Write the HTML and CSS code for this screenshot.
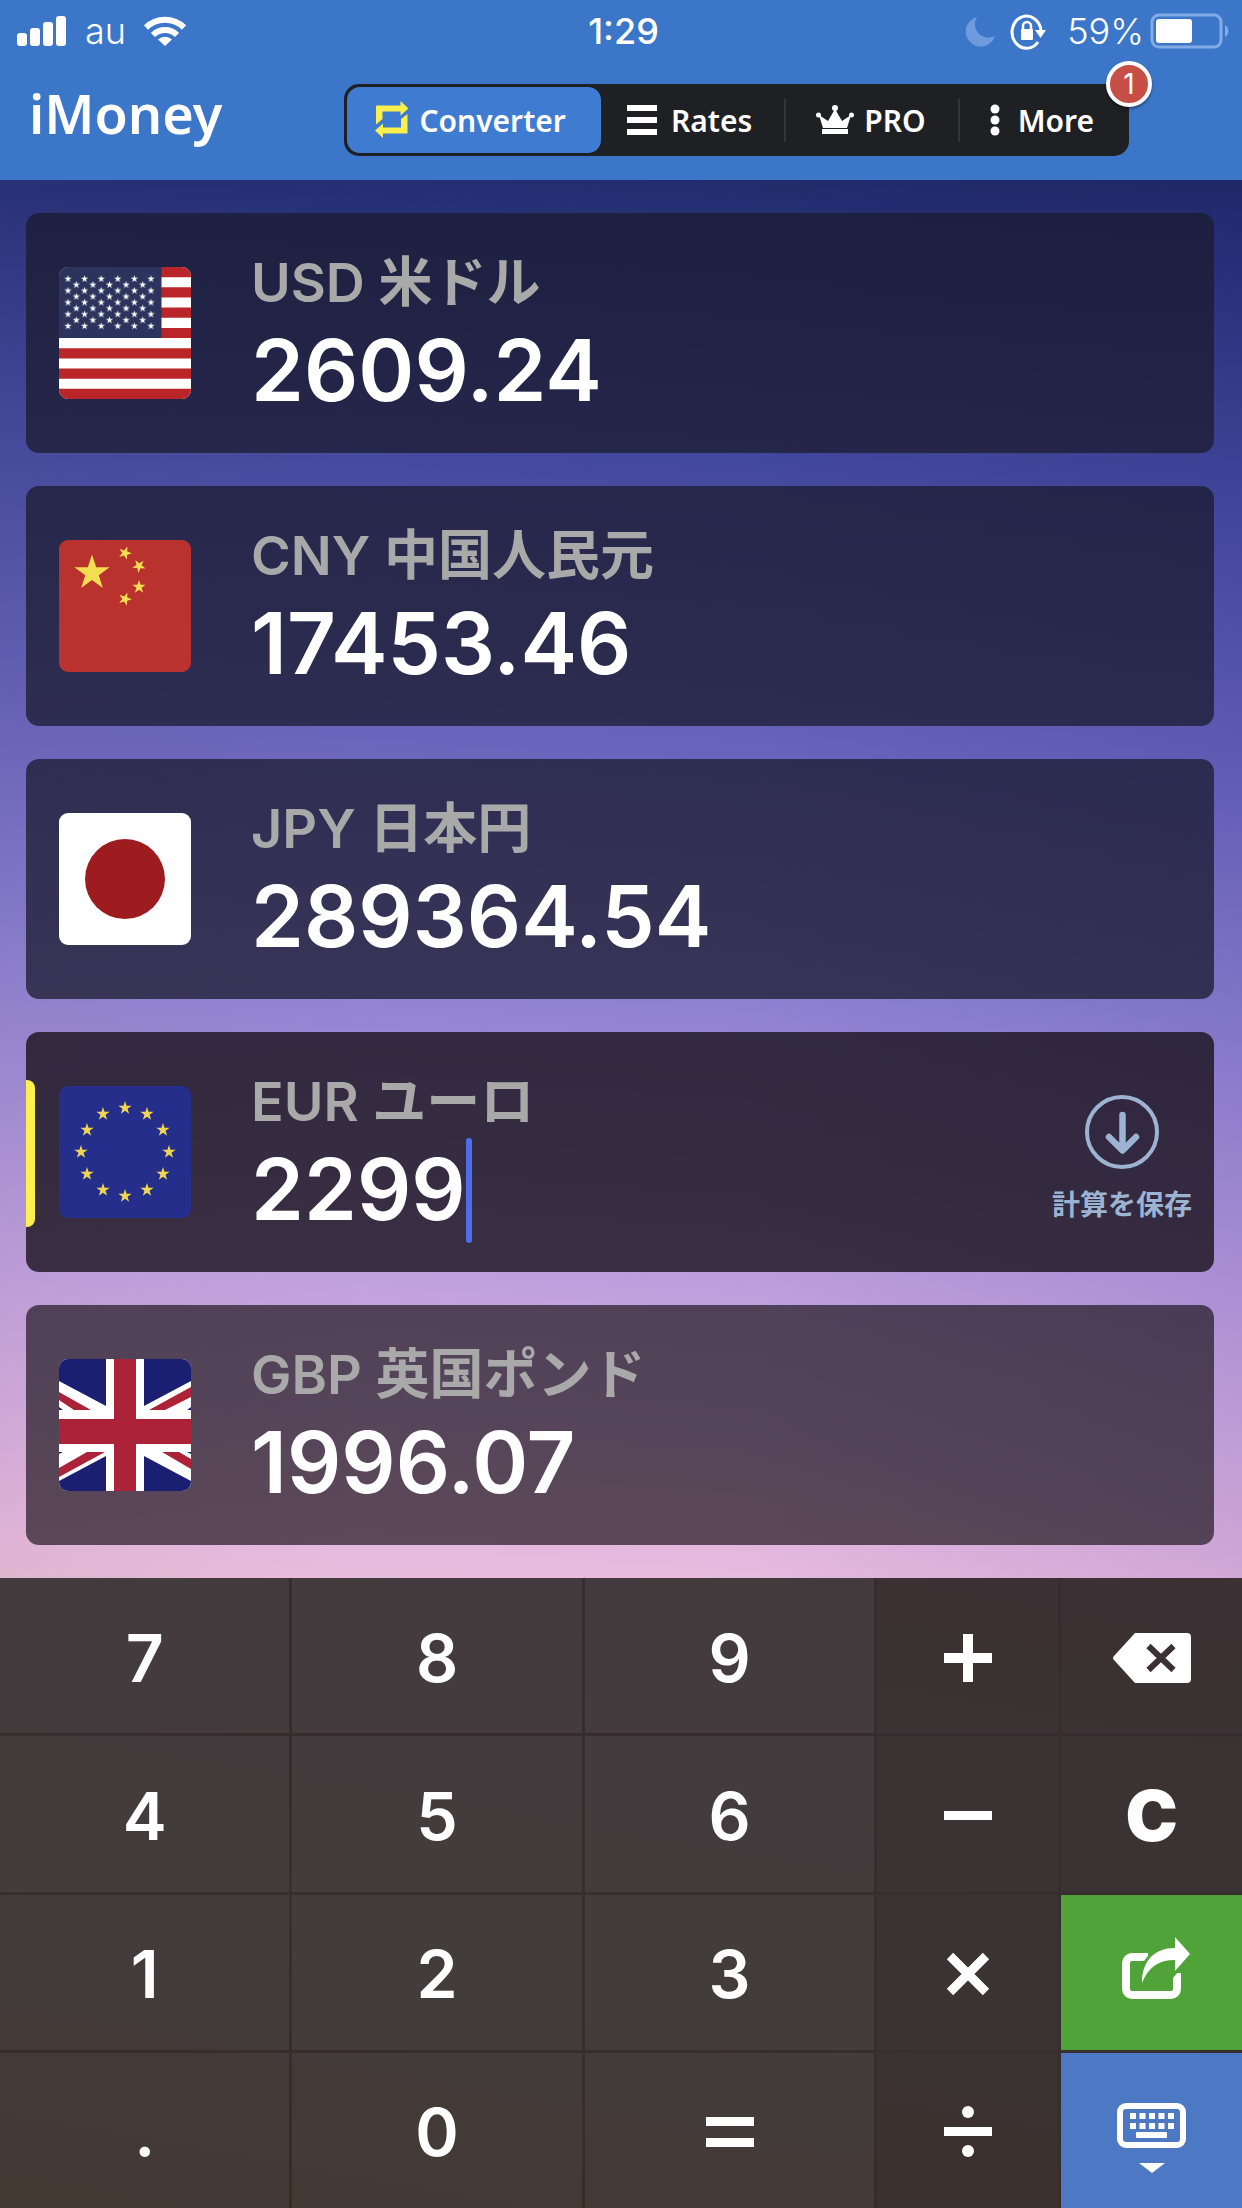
FILE: index.html
```html
<!DOCTYPE html>
<html lang="ja">
<head>
  <meta charset="utf-8">
  <meta name="viewport" content="width=device-width, initial-scale=1">
  <title>iMoney</title>
  <link rel="stylesheet" href="styles.css">
</head>
<body>
  <!-- shared star shape for the flags -->
  <svg class="defs" width="0" height="0">
    <defs>
      <polygon id="star" points="0,-10 2.25,-3.09 9.51,-3.09 3.63,1.18 5.88,8.09 0,3.82 -5.88,8.09 -3.63,1.18 -9.51,-3.09 -2.25,-3.09"/>
      <pattern id="stars" width="16.6" height="11.8" patternUnits="userSpaceOnUse">
        <use href="#star" transform="translate(8.3 5.9) scale(.38)" fill="#fff"/>
      </pattern>
    </defs>
  </svg>

  <header class="header">
    <div class="status">
      <div class="status-left">
        <svg width="50" height="32" viewBox="0 0 50 32" fill="#fff">
          <rect x="0" y="18" width="10" height="13" rx="3"/>
          <rect x="13" y="13" width="10" height="18" rx="3"/>
          <rect x="26" y="7" width="10" height="24" rx="3"/>
          <rect x="39" y="1" width="10" height="30" rx="3"/>
        </svg>
        <span>au</span>
        <svg width="42" height="32" viewBox="0 0 42 32" fill="none" stroke="#fff" stroke-width="6">
          <path d="M2 12.500a27 27 0 0 1 38 0"/>
          <path d="M9 20a17 17 0 0 1 24 0"/>
          <path d="M21 31l-7-6.500a10 10 0 0 1 14 0z" fill="#fff" stroke="none"/>
        </svg>
      </div>
      <time class="clock">1:29</time>
      <div class="status-right">
        <svg width="28" height="29" viewBox="0 0 28 29"><path d="M10 0A15 15 0 1 0 28 19A13.500 13.500 0 0 1 10 0z" fill="#6d9bdd"/></svg>
        <svg width="36" height="38" viewBox="0 0 36 38" fill="none" stroke="#fff" stroke-width="3">
          <path d="M27 30a14.500 16 0 1 1 3-11"/>
          <path d="M24 18h11l-5.500 8z" fill="#fff" stroke="none"/>
          <rect x="10" y="17" width="12" height="11" rx="1" fill="#fff" stroke="none"/>
          <path d="M12 18v-4a4 4 0 0 1 8 0v4" stroke-width="2.500"/>
        </svg>
        <span class="percent">59%</span>
        <svg width="80" height="42" viewBox="0 0 80 42">
          <rect x="2" y="5" width="69" height="32" rx="7" fill="none" stroke="#83abe4" stroke-width="3"/>
          <rect x="6" y="9" width="36" height="24" rx="3" fill="#fff"/>
          <path d="M75 15a7 7 0 0 1 0 12z" fill="#83abe4"/>
        </svg>
      </div>
    </div>

    <div class="navbar">
      <h1 class="brand">iMoney</h1>
      <nav class="tabs">
        <a href="#converter" class="tab active">
          <svg width="34" height="38" viewBox="0 0 34 38" fill="#f9f04d">
            <path d="M1 4.500h24.500V0l8 7.500-8 7v-4H7.500V18L1 23.500z"/>
            <path d="M32.500 32.500H8V37l-8-7.500 8-7v4h18V18l6.500-5z"/>
          </svg>
          Converter
        </a>
        <a href="#rates" class="tab tab-rates">
          <svg width="30" height="32" viewBox="0 0 30 32" fill="#fff"><path d="M0 1h30v6H0zM0 13h30v6H0zM0 25h30v6H0z"/></svg>
          Rates
        </a>
        <a href="#pro" class="tab tab-pro">
          <svg width="38" height="30" viewBox="0 0 38 30" fill="#fff">
            <path d="M3 10l9 6 7-12 7 12 9-6-4 13H7z"/>
            <circle cx="19" cy="3" r="3"/><circle cx="2.500" cy="10" r="2.500"/><circle cx="35.500" cy="10" r="2.500"/>
            <path d="M6 24h26v5H6z"/>
          </svg>
          PRO
        </a>
        <a href="#more" class="tab tab-more">
          <svg width="10" height="32" viewBox="0 0 10 32" fill="#fff"><circle cx="5" cy="5" r="4.500"/><circle cx="5" cy="16" r="4.500"/><circle cx="5" cy="27" r="4.500"/></svg>
          More
        </a>
        <span class="badge">1</span>
      </nav>
    </div>
  </header>

  <main class="cards">
    <section class="card">
      <svg class="flag" viewBox="0 0 132 132">
        <rect width="132" height="132" fill="#fff"/>
        <path d="M0 5.080h132M0 25.380h132M0 45.690h132M0 66h132M0 86.300h132M0 106.610h132M0 126.920h132" stroke="#ba2529" stroke-width="10.150"/>
        <rect width="102.500" height="71" fill="#2c345e"/>
        <g transform="translate(.7 6)"><rect width="99.600" height="59" fill="url(#stars)"/></g>
        <g transform="translate(9 11.900)"><rect width="83" height="47.200" fill="url(#stars)"/></g>
      </svg>
      <div class="info">
        <label class="name" for="usd">USD 米ドル</label>
        <input class="value" id="usd" type="text" value="2609.24" readonly>
      </div>
    </section>

    <section class="card">
      <svg class="flag" viewBox="0 0 132 132" fill="#f3dd50">
        <rect width="132" height="132" fill="#b9322e"/>
        <use href="#star" transform="translate(33 33) scale(1.850)"/>
        <use href="#star" transform="translate(66 13) rotate(20) scale(.7)"/>
        <use href="#star" transform="translate(80 26) rotate(40) scale(.7)"/>
        <use href="#star" transform="translate(80 47) scale(.7)"/>
        <use href="#star" transform="translate(66 59) rotate(20) scale(.7)"/>
      </svg>
      <div class="info">
        <label class="name" for="cny">CNY 中国人民元</label>
        <input class="value" id="cny" type="text" value="17453.46" readonly>
      </div>
    </section>

    <section class="card">
      <svg class="flag" viewBox="0 0 132 132">
        <rect width="132" height="132" fill="#fff"/>
        <circle cx="66" cy="66" r="40" fill="#9c1c20"/>
      </svg>
      <div class="info">
        <label class="name" for="jpy">JPY 日本円</label>
        <input class="value" id="jpy" type="text" value="289364.54" readonly>
      </div>
    </section>

    <section class="card selected">
      <svg class="flag" viewBox="0 0 132 132" fill="#efd550">
        <rect width="132" height="132" fill="#262e8c"/>
        <use href="#star" transform="translate(66 22) scale(.7)"/>
        <use href="#star" transform="translate(88 28) scale(.7)"/>
        <use href="#star" transform="translate(104 44) scale(.7)"/>
        <use href="#star" transform="translate(110 66) scale(.7)"/>
        <use href="#star" transform="translate(104 88) scale(.7)"/>
        <use href="#star" transform="translate(88 104) scale(.7)"/>
        <use href="#star" transform="translate(66 110) scale(.7)"/>
        <use href="#star" transform="translate(44 104) scale(.7)"/>
        <use href="#star" transform="translate(28 88) scale(.7)"/>
        <use href="#star" transform="translate(22 66) scale(.7)"/>
        <use href="#star" transform="translate(28 44) scale(.7)"/>
        <use href="#star" transform="translate(44 28) scale(.7)"/>
      </svg>
      <div class="info">
        <label class="name" for="eur">EUR ユーロ</label>
        <div class="editing">
          <input class="value" id="eur" type="text" value="2299" inputmode="none">
          <span class="caret"></span>
        </div>
      </div>
      <button class="save" type="button">
        <svg width="76" height="76" viewBox="0 0 76 76" fill="none" stroke="#9cb4d2" stroke-linecap="round" stroke-linejoin="round">
          <circle cx="38" cy="38" r="35" stroke-width="4"/>
          <path d="M38.500 21v35M25 43l13.500 13.500L52 43" stroke-width="6.500"/>
        </svg>
        計算を保存
      </button>
    </section>

    <section class="card light">
      <svg class="flag" viewBox="0 0 132 132">
        <rect width="132" height="132" fill="#fff"/>
        <path d="M0 0h47v47L0 22zM132 0H85v47l47-25zM0 132h47V97L0 122zM132 132H85V97l47 25zM0 48l4 3H0zM132 48l-4 3h4zM0 95l4-2H0zM132 95l-4-2h4z" fill="#1b1f72"/>
        <path d="M55 0h22v60h55v25H77v47H55V85H0V60h55zM0 33l32 18H15L0 41zM132 28v10l-26 13H90zM0 109l28-16h18L0 118zM103 93h17l12 7v10z" fill="#ac2238"/>
      </svg>
      <div class="info">
        <label class="name" for="gbp">GBP 英国ポンド</label>
        <input class="value" id="gbp" type="text" value="1996.07" readonly>
      </div>
    </section>
  </main>

  <div class="keypad">
    <button class="key num">7</button>
    <button class="key num">8</button>
    <button class="key num">9</button>
    <button class="key" aria-label="plus"><svg width="48" height="48" viewBox="0 0 48 48"><path d="M19 0h10v19h19v10H29v19H19V29H0V19h19z" fill="#fff"/></svg></button>
    <button class="key" aria-label="backspace">
      <svg width="78" height="50" viewBox="0 0 78 50">
        <path d="M22 0h52a4 4 0 0 1 4 4v42a4 4 0 0 1-4 4H22L1 27q-2-2 0-4z" fill="#fff"/>
        <path d="M35.500 13l25 24M60.500 13l-25 24" stroke="#3b3033" stroke-width="6"/>
      </svg>
    </button>

    <button class="key num">4</button>
    <button class="key num">5</button>
    <button class="key num">6</button>
    <button class="key" aria-label="minus"><svg width="48" height="48" viewBox="0 0 48 48"><path d="M0 19h48v9H0z" fill="#fff"/></svg></button>
    <button class="key clear">C</button>

    <button class="key num">1</button>
    <button class="key num">2</button>
    <button class="key num">3</button>
    <button class="key" aria-label="multiply"><svg width="48" height="48" viewBox="0 0 48 48"><path d="M6 6l36 36M42 6L6 42" stroke="#fff" stroke-width="9"/></svg></button>
    <button class="key share" aria-label="share">
      <svg width="76" height="70" viewBox="-8 2 76 70">
        <path d="M26 20H10a6 6 0 0 0-6 6v26a6 6 0 0 0 6 6h39a6 6 0 0 0 6-6V36" fill="none" stroke="#fff" stroke-width="8"/>
        <path d="M20 46C20 24 32 11 53 11V0l15 17-15 17V23C37 23 26 30 20 46z" fill="#fff" stroke="#4fa339" stroke-width="6" paint-order="stroke"/>
      </svg>
    </button>

    <button class="key num">.</button>
    <button class="key num">0</button>
    <button class="key num" aria-label="equals"><svg width="48" height="30" viewBox="0 0 48 30"><path d="M0 0h48v9H0zM0 21h48v9H0z" fill="#fff"/></svg></button>
    <button class="key" aria-label="divide"><svg width="48" height="52" viewBox="0 0 48 52" fill="#fff"><path d="M0 21h48v9H0z"/><circle cx="24" cy="6" r="6"/><circle cx="24" cy="45" r="6"/></svg></button>
    <button class="key hide" aria-label="hide keyboard">
      <svg width="70" height="52" viewBox="0 0 70 52" fill="#fff">
        <rect x="3" y="0" width="63" height="39" rx="6" fill="none" stroke="#fff" stroke-width="6"/>
        <path d="M16 7v6M25.500 7v6M35 7v6M44.500 7v6M54 7v6M16 17v6M25.500 17v6M35 17v6M44.500 17v6M54 17v6" stroke="#fff" stroke-width="6"/>
        <rect x="19" y="26" width="31" height="6" rx="1"/>
        <path d="M22 57h26L35 67z"/>
      </svg>
    </button>
  </div>
</body>
</html>
```
FILE: styles.css
```css
* { box-sizing: border-box; }
body {
  margin: 0;
  min-height: 100vh;
  display: flex;
  flex-direction: column;
  font-family: Inter, "Noto Sans CJK JP", sans-serif;
  color: white;
  background: #3c76c9;
}
svg { display: block; flex: none; overflow: visible; }
.defs { position: absolute; }
button, input { font: inherit; color: inherit; border: none; padding: 0; background: none; }
button { cursor: pointer; }

/* header */
.header { background: #3c76c9; }
.status {
  display: grid;
  grid-template-columns: 1fr auto 1fr;
  align-items: center;
  height: 62px;
  padding: 0 12px 0 17px;
  font-size: 36px;
  line-height: 44px;
}
.status-left, .status-right { display: flex; align-items: center; gap: 18px; }
.status-left { font-weight: 300; }
.status-right { justify-content: flex-end; gap: 16px; }
.percent { font-weight: 300; margin: 0 -10px 0 4px; }
.clock { font-weight: 500; }
.navbar {
  display: flex;
  align-items: center;
  justify-content: space-between;
  height: 118px;
  padding: 0 113px 2px 29px;
  font-family: "Noto Sans", sans-serif;
}
.brand { margin: 0; padding-bottom: 14px; font-size: 54px; line-height: 64px; font-weight: 600; }
.tabs {
  position: relative;
  display: flex;
  height: 72px;
  padding: 3px;
  border-radius: 15px;
  background: #1f2024;
}
.tab {
  display: flex;
  align-items: center;
  gap: 10px;
  padding: 0 32px;
  color: white;
  font-size: 30px;
  font-weight: 600;
  text-decoration: none;
}
.tab.active { padding: 0 35px 0 28px; border-radius: 13px; background: #3f7bd0; }
.tab-rates { gap: 14px; padding: 0 32px 0 26px; }
.tab-pro, .tab-more {
  background: linear-gradient(#33353a, #33353a) left center / 2px 43px no-repeat;
}
.tab-more { gap: 18px; }
.badge {
  position: absolute;
  top: -23px;
  right: -23px;
  width: 46px;
  height: 46px;
  border: 4px solid white;
  border-radius: 50%;
  background: #c74f45;
  box-shadow: 0 2px 3px rgba(0, 0, 0, .4);
  font: 28px/38px Inter, sans-serif;
  text-align: center;
}

/* currency cards */
.cards {
  display: flex;
  flex-direction: column;
  gap: 33px;
  padding: 33px 28px 33px 26px;
  background:
    linear-gradient(90deg, rgba(60, 40, 80, .06), transparent 30%, transparent 60%, rgba(50, 30, 130, .1)),
    linear-gradient(184deg, #1e2866 0%, #273177 6%, #42489b 21%, #6563ba 40%, #9385d3 60%, #c3a2de 79%, #e8bbdf 97%, #eabfd8 100%);
}
.card {
  position: relative;
  display: flex;
  align-items: center;
  min-height: 240px;
  padding: 0 22px 0 33px;
  border-radius: 13px;
  background: rgba(27, 27, 48, .76);
}
.card.selected { background: rgba(28, 21, 32, .82); }
.card.light { background: rgba(24, 18, 24, .67); }
.card.selected::before {
  content: "";
  position: absolute;
  left: 0;
  top: 48px;
  width: 9px;
  height: 147px;
  border-radius: 0 8px 8px 0;
  background: #fff04d;
}
.flag { width: 132px; height: 132px; border-radius: 9px; overflow: hidden; }
.info { flex: 1; min-width: 0; padding-top: 12px; margin-left: 60px; }
.name {
  display: block;
  font-size: 54px;
  line-height: 64px;
  font-weight: 600;
  color: #a9a9a9;
}
.value {
  display: block;
  width: 100%;
  height: 112px;
  font-size: 85px;
  line-height: 112px;
  font-weight: 600;
  outline: none;
}
.editing { display: flex; align-items: center; }
.editing .value { width: auto; field-sizing: content; }
.caret { width: 6px; height: 105px; border-radius: 3px; background: #4d6ee8; }
.save {
  display: flex;
  flex-direction: column;
  align-items: center;
  gap: 18px;
  padding-top: 12px;
  font-size: 28px;
  line-height: 34px;
  font-weight: 600;
  color: #9cb4d2;
}

/* keypad */
.keypad {
  flex: 1;
  display: grid;
  grid-template-columns: 8fr 8fr 8fr 5fr 5fr;
  grid-auto-rows: 1fr;
  gap: 3px;
  background: linear-gradient(190deg, #372c30, #372e2f 60%, #382b20);
}
.key {
  display: flex;
  align-items: center;
  justify-content: center;
  min-height: 155px;
  padding-top: 4px;
  background: rgba(76, 70, 70, .2);
  font-size: 66px;
  line-height: 80px;
  font-weight: 600;
}
.key.num { background: rgba(104, 102, 104, .26); }
.key.clear { font-size: 70px; font-weight: 900; }
.key.share { background: #4fa339; }
.key.hide { background: #4c78c4; }
```
